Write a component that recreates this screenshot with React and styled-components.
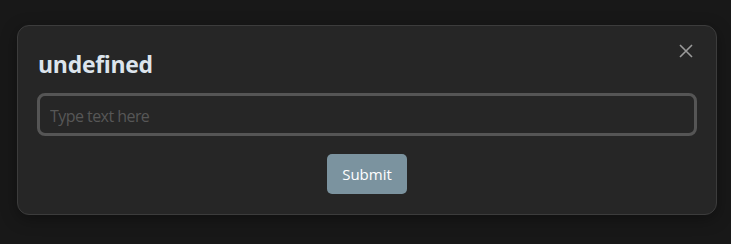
import { useState } from "react";
import styled, { createGlobalStyle } from "styled-components";

// global page styles
const GlobalStyle = createGlobalStyle`
  html, body {
    margin: 0;
    padding: 0;
    background: #181818;
    font-family: "Open Sans", "Noto Sans", sans-serif;
  }
`;

const Page = styled.div`
  width: 731px;
  height: 244px;
  padding: 25px 14px 0 17px;
  box-sizing: border-box;
`;

const Modal = styled.div`
  position: relative;
  display: flex;
  flex-direction: column;
  box-sizing: border-box;
  width: 700px;
  height: 190px;
  padding: 20px 19px 20px 19px;
  background: #262626;
  border: 1px solid #3c3c3c;
  border-radius: 12px;
  box-shadow: 0 4px 16px rgba(0, 0, 0, 0.35);
`;

const Title = styled.h2`
  margin: 3px 0 14px 1px;
  font-size: 23px;
  line-height: 30px;
  font-weight: 700;
  letter-spacing: -0.3px;
  color: #dce4ec;
`;

const CloseButton = styled.button`
  position: absolute;
  top: 15px;
  right: 20px;
  width: 20px;
  height: 20px;
  padding: 0;
  border: none;
  background: transparent;
  display: flex;
  align-items: center;
  justify-content: center;
  cursor: pointer;
`;

const TextInput = styled.input`
  box-sizing: border-box;
  width: 100%;
  height: 44px;
  padding: 3px 10px 0;
  background: #262626;
  border: 3px solid #555555;
  border-radius: 8px;
  color: #dddddd;
  font-family: "Open Sans", "Noto Sans", sans-serif;
  font-size: 16px;
  letter-spacing: -0.55px;
  outline: none;
  caret-color: #dddddd;
  &::placeholder {
    color: #575757;
  }
`;

const Actions = styled.div`
  display: flex;
  justify-content: center;
  margin-top: 18px;
`;

const SubmitButton = styled.button`
  width: 80px;
  height: 40px;
  border: none;
  border-radius: 5px;
  background: #7b939f;
  color: #ffffff;
  font-family: "Open Sans", "Noto Sans", sans-serif;
  font-size: 15px;
  cursor: pointer;
`;

const App = () => {
  const [text, setText] = useState("");

  return (
    <Page>
      <GlobalStyle />
      <Modal>
        <CloseButton aria-label="Close">
          <svg width="16" height="16" viewBox="0 0 16 16">
            <path
              d="M2 2 L14 14 M14 2 L2 14"
              stroke="#9a9a9a"
              strokeWidth="1.6"
              fill="none"
            />
          </svg>
        </CloseButton>
        <Title>undefined</Title>
        <TextInput
          autoFocus
          type="text"
          value={text}
          placeholder="Type text here"
          onChange={(e) => setText(e.target.value)}
        />
        <Actions>
          <SubmitButton>Submit</SubmitButton>
        </Actions>
      </Modal>
    </Page>
  );
};

export default App;
